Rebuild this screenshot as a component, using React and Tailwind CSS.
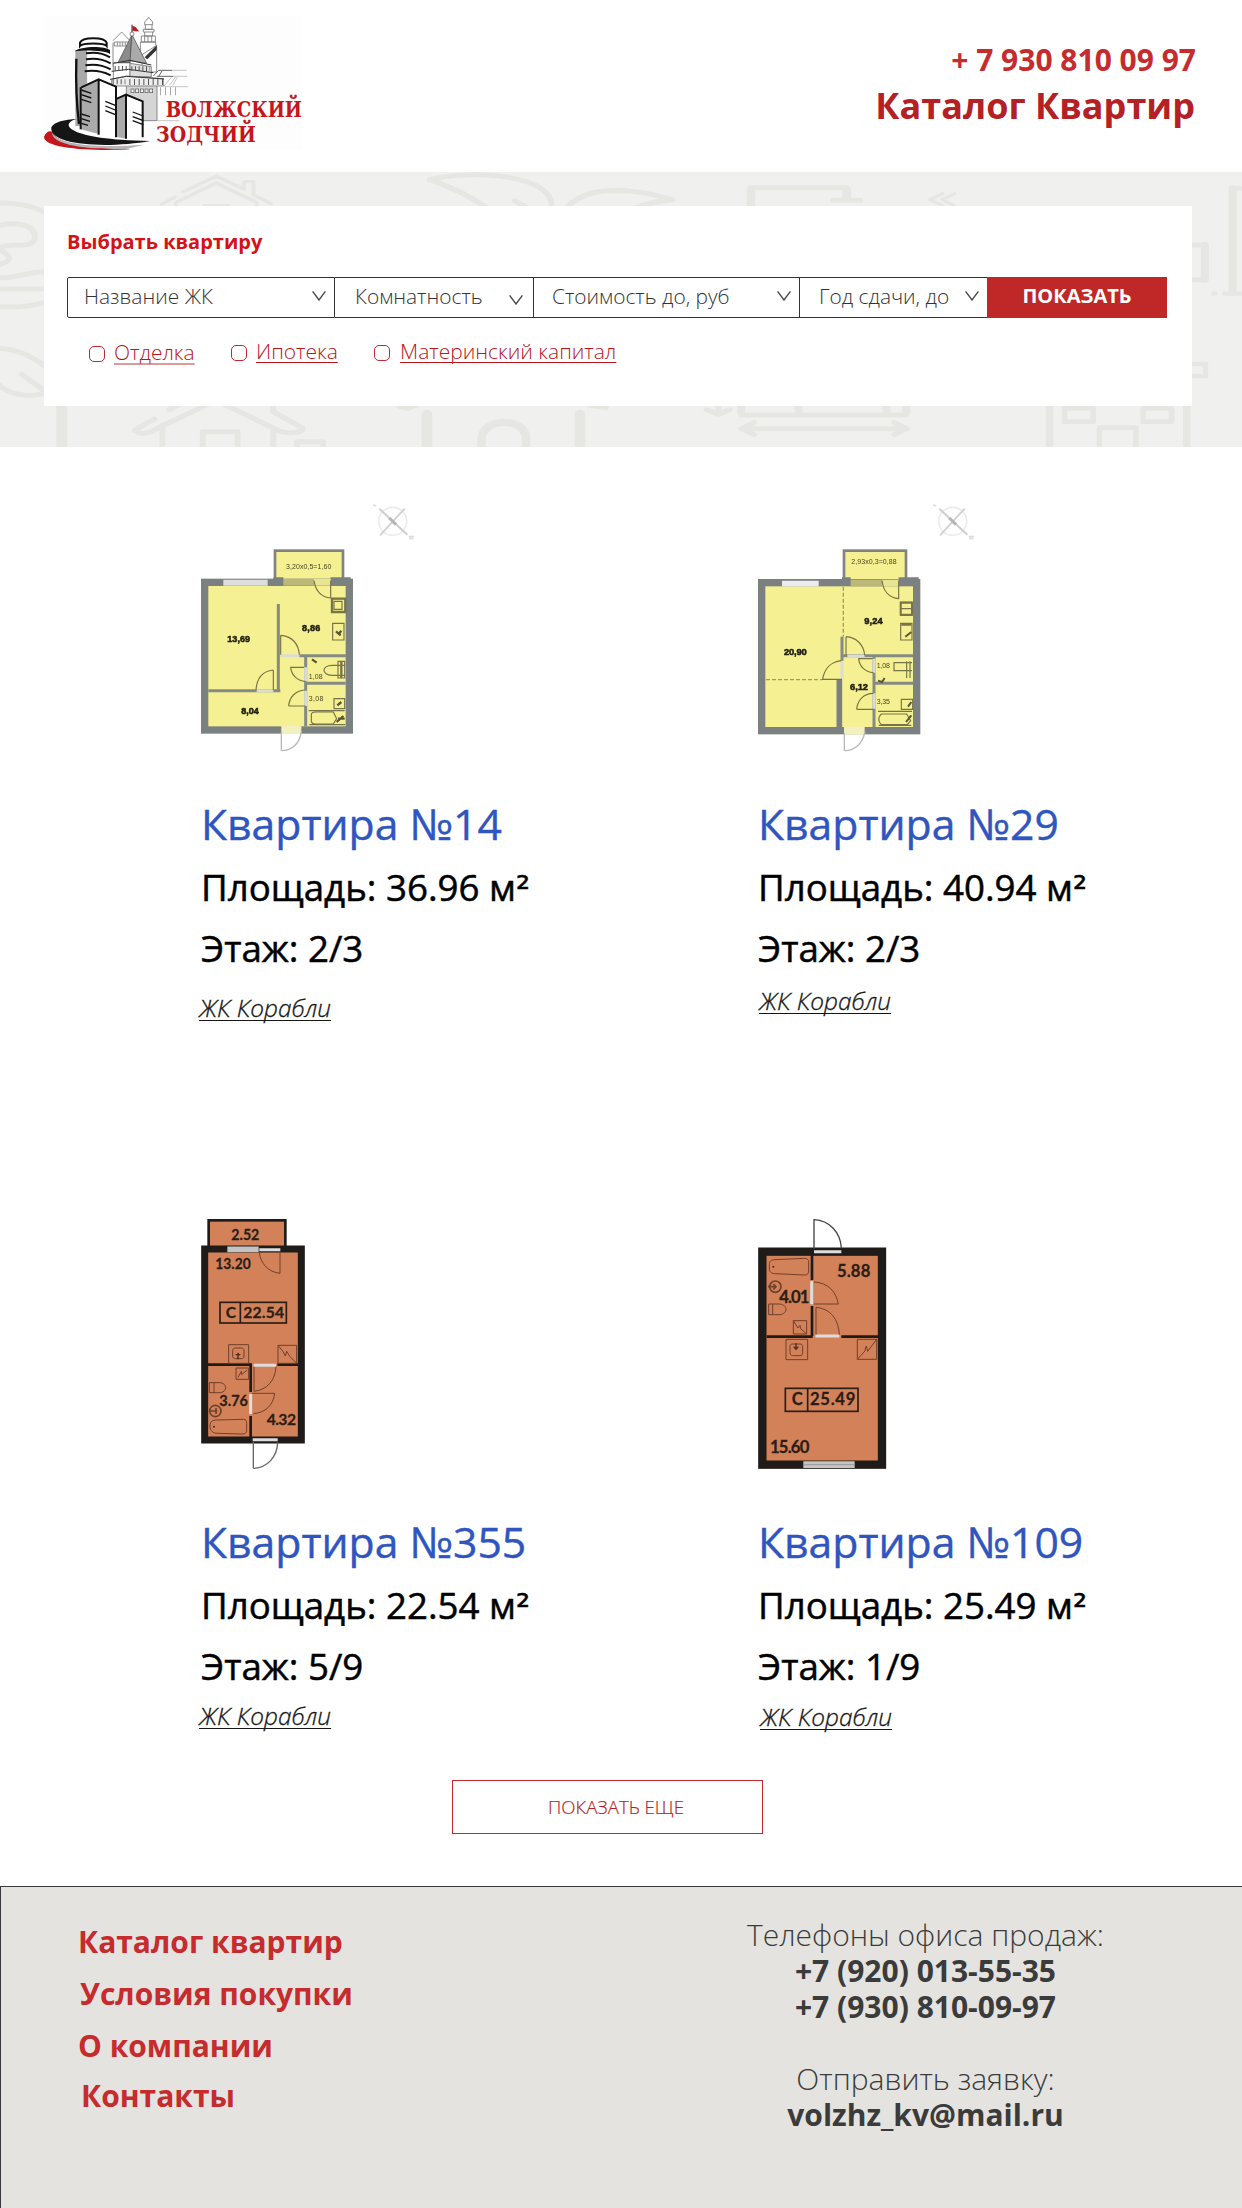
import React from "react";

function Logo() {
  return (
    <svg className="h-[170px] w-[290px] shrink-0" viewBox="0 0 870 510" fill="none">
      <rect x="42" y="50" width="774" height="400" fill="#fdfdfd" />
      {/* kremlin towers */}
      <g stroke="#777" strokeWidth="2.5">
        <path d="M249 200V128M249 122L275 96L300 122V200M253 126h44v12h-44zM262 127v10M270 127v10M278 127v10M286 127v10" fill="#fff" />
        <path d="M331 165V126h46v10M344 66l12-14 12 14v8h-24zM346 74v14h20V74M340 88h32v8h-32zM344 96v12h24V96M334 108h42v18h-42zM344 108v18M354 108v18M365 108v18" fill="#fff" />
        <path d="M336 164l44-28v80h-44z" fill="#fff" />
        <path d="M289 362V236h92v126z" fill="#d5d5d5" />
        <path d="M250 212V188h50v50h-50z" fill="#fff" />
        <path d="M300 190l64 10v30h-64z" fill="#ddd" />
        <path d="M245 238l45-10 110 8v22h-155z" fill="#eee" />
      </g>
      <path d="M344 172l36-36v14l-28 28z" fill="#333" />
      <path d="M264 188L306 104L300 188z" fill="#8b8b8b" stroke="#444" strokeWidth="2" />
      <path d="M306 104L350 190L300 182z" fill="#aaa" stroke="#444" strokeWidth="2" />
      <path d="M250 190l50-9 64 14M245 214l50-6 75 10M240 238l50-9 112 8" stroke="#333" strokeWidth="3" />
      <path d="M254 205h42" stroke="#555" strokeWidth="14" strokeDasharray="3 8" />
      <path d="M304 206h56" stroke="#555" strokeWidth="14" strokeDasharray="3 8" />
      <path d="M248 245h38" stroke="#555" strokeWidth="15" strokeDasharray="3 9" />
      <path d="M298 246h104" stroke="#555" strokeWidth="18" strokeDasharray="3 11" />
      <path d="M390 274h50" stroke="#aaa" strokeWidth="24" strokeDasharray="3 12" />
      <g fill="#eee" stroke="#555" strokeWidth="2">
        <rect x="303" y="267" width="9" height="11" /><rect x="317" y="267" width="9" height="11" /><rect x="331" y="267" width="9" height="11" /><rect x="345" y="267" width="9" height="11" /><rect x="359" y="267" width="9" height="11" />
      </g>
      <path d="M370 228l16-17h40M386 229l10-16M380 229h50" stroke="#444" strokeWidth="2.5" />
      <path d="M426 211h44M430 229h42M402 258l22-26M418 256l20-26M428 256l14-24M400 260h74M380 362h68" stroke="#bbb" strokeWidth="2.5" />
      <path d="M306 74v24" stroke="#222" strokeWidth="3" />
      <circle cx="306" cy="102" r="6" fill="#fff" stroke="#555" strokeWidth="2" />
      <path d="M308 78l9 4 9 12-18-2z" fill="#c4161c" stroke="#8d1014" />
      {/* round tower */}
      <path d="M136 150h36v100l-18 12v116h-18z" fill="#a9a9a9" />
      <path d="M172 150h66v100h-66z" fill="#fff" />
      <path d="M150 138v-10c6-18 74-18 80 0v10c-8-10-72-10-80 0z" fill="#fff" stroke="#111" strokeWidth="6" />
      <path d="M134 154c14-16 90-18 106-4v12c-18-12-82-12-106-8z" fill="#111" />
      <path d="M139 176c-2 70 0 130 8 196" stroke="#111" strokeWidth="7" />
      <path d="M168 160c24-4 52 0 72 12M168 178c24-4 52 0 74 12M166 196c24-4 54 0 76 12M164 214c26-4 54 0 78 12" stroke="#111" strokeWidth="6" />
      {/* front blocks */}
      <path d="M152 262l54-24v164l-54-14z" fill="#aaa" />
      <path d="M206 238l52 20v154l-52-8z" fill="#fff" />
      <path d="M258 296l30-10v130l-30-6z" fill="#aaa" />
      <path d="M288 286l50 18v106l-50 4z" fill="#fff" />
      <path d="M154 262l52-24 52 22v152M206 238v166M152 262v126M256 298l32-14 50 20v108M288 284v132" stroke="#111" strokeWidth="6" />
      <path d="M154 270l30 10M154 284l30 10M154 298l30 10M154 342l26 8M154 356l26 8M154 370l20 6M226 304l30 12M226 318l30 12M226 332l30 12M308 336l32 12M308 350l32 12M308 362l32 12" stroke="#111" strokeWidth="4" />
      {/* sweeping base */}
      <path d="M42 410c6-14 16-20 26-14c10 34 100 48 216 48l16 4c-110 6-260-2-258-38z" fill="#c4161c" />
      <path d="M66 396c10 36 130 50 276 38l-50 12c-120 4-228-10-226-50z" fill="#b5b5b5" />
      <path d="M64 382c8-16 40-24 76-25c-54 14-30 62 220 66c-120 22-304 16-296-41z" fill="#151515" />
      <g fill="#c4161c" fontFamily="'DejaVu Serif', 'Liberation Serif', serif" fontWeight="700" fontSize="68">
        <text x="407" y="351" textLength="409" lengthAdjust="spacingAndGlyphs">ВОЛЖСКИЙ</text>
        <text x="378" y="427" textLength="300" lengthAdjust="spacingAndGlyphs">ЗОДЧИЙ</text>
      </g>
    </svg>
  );
}

function Pattern() {
  return (
    <svg className="absolute inset-0 h-full w-full" viewBox="0 172 1242 275" fill="none" stroke="#e6e7e3" strokeLinecap="round" strokeLinejoin="round">
      <g transform="translate(0 165) scale(.3961 .3333)" strokeWidth="15">
        <path d="M-20 116c60-8 120 10 150 40M-10 184c40-14 100-10 98 34c-4 40-80 10-88 34c20 20 40 30 0 46M-10 338c60 4 66-18 130-18M-10 372h120M-10 424c50 6 90 0 130-14" />
        <path d="M-10 550c60 0 100 30 130 60M-10 650c30 44 90 50 130 30M55 628l70 60" />
        <path d="M462 80l84-46 70 38M616 72V50h24v40l44 26M408 118l34-22M444 128V112L546 54l102 58v16M516 122h60" strokeWidth="10" />
        <path d="M156 722v130" strokeWidth="28" strokeLinecap="butt" />
        <path d="M340 796l50-34M428 734l40-26M350 804c20 4 30-2 44-12L545 706l160 92c20 10 60 6 60-8L690 740V716" />
        <path d="M410 780v80M512 860v-60h88v60M690 790v60M750 850v-20h66v20" />
        <path d="M1085 44c100-30 316-20 308 86M1085 44c70 30 100 50 146 86M1300 108l30 20M1430 128c40-50 100-54 150-52" />
        <path d="M1078 748v110M1464 748v110" strokeWidth="27" />
        <path d="M1216 860v-40c4-64 110-64 112 0v40" strokeWidth="22" />
        <path d="M1008 724l20 6 26-10M1490 722l40 6" />
      </g>
      <g transform="translate(621 165) scale(.3961 .3333)" strokeWidth="15">
        <path d="M-20 78c60-4 100 10 150 26c-50 6-70 14-96 26" />
        <path d="M328 130V68h242v36M536 106h68" />
        <path d="M328 130V70M570 70v30" strokeWidth="22" strokeLinecap="butt" />
        <path d="M812 86l-32 18 32 18M842 86l-32 18 32 18" strokeWidth="9" />
        <path d="M1440 240h36v104h-36" />
        <path d="M1474 240v104M1544 70v310" strokeWidth="20" />
        <path d="M1544 70h40M1496 386h4M1524 386h60M1440 597h36v36h-36" strokeWidth="13" />
        <path d="M246 716v30M216 734l30 14 28-14" />
        <path d="M304 716v34h416v-34" />
        <path d="M448 716v32M670 716v32M304 716v32M720 716v32" strokeWidth="20" strokeLinecap="butt" />
        <path d="M306 791h414M336 773l-32 18 32 18M690 773l32 18-32 18" />
        <path d="M1082 716v144M1428 716v144" strokeWidth="19" />
        <path d="M1120 730h72v40h-72zM1318 730h72v40h-72zM1208 860v-72h92v72" strokeWidth="14" />
      </g>
    </svg>
  );
}

function Compass() {
  return (
    <g stroke="#cfcfcf" strokeWidth="5">
      <circle cx="638" cy="94" r="42" stroke="#ebebeb" />
      <path d="M598 56l84 78" strokeWidth="6" />
      <path d="M674 56l-74 80" />
      <path d="M628 84l20 20" stroke="#b5b5b5" strokeWidth="9" />
      <path d="M580 44l8 4M686 140h16M688 146h12" stroke="#ddd" />
    </g>
  );
}

function Plan14() {
  return (
    <svg className="block h-[284px] w-[242px] blur-[0.7px]" viewBox="54 0 726 852" fill="none">
      <Compass />
      <rect x="285" y="182" width="204" height="90" fill="#f5f092" stroke="#7f8483" strokeWidth="8" />
      <rect x="74" y="277" width="434" height="443" fill="#f5f092" stroke="#7b8080" strokeWidth="22" />
      <path d="M280 274h30M452 274h60" stroke="#7b8080" strokeWidth="24" />
      <path d="M130 278h133" stroke="#dedede" strokeWidth="18" />
      <path d="M310 277h92" stroke="#bdb877" strokeWidth="20" />
      <path d="M402 277h50" stroke="#e9e491" strokeWidth="20" />
      <path d="M295 342v262M85 602h216M358 497h140M377 497v212M377 580h120" stroke="#858a84" strokeWidth="9" />
      <path d="M302 497h56M377 532v42M377 602v46M230 602h50" stroke="#dcdcd4" strokeWidth="9" />
      <path d="M304 720h60" stroke="#f3f0c0" strokeWidth="24" />
      <g stroke="#77744a" strokeWidth="3.5">
        <path d="M402 272c4 30 22 50 50 52V272M302 436c34 2 54 26 56 58M302 436v58M280 540c-36 4-50 30-52 60M280 540v60M372 532h-40c2 22 18 40 44 42M326 648c2-26 20-46 48-48M326 648h50" />
        <path d="M456 326h40v40h-40zM462 334h24v24h-24zM458 400h34v50h-34zM496 526h-40c-32 0-32 30 0 30h40M474 514h20v50h-20zM462 626h32v30h-32zM386 662h108M388 704h108M394 674c0-8 8-8 14-8h52l10 20-10 16h-52c-10 0-14-4-14-10z" />
      </g>
      <path d="M456 326h40v40h-40zM484 514v50" stroke="#77744a" strokeWidth="7" />
      <path d="M476 432l8-10M468 424l14 12M470 696l20-18M474 686h20M396 508l14 10M472 646l12-10" stroke="#5a5738" strokeWidth="7" />
      <path d="M304 726v56M304 782c34 0 56-24 60-58" stroke="#b9b9b9" strokeWidth="4" />
      <g fill="#222010" stroke="#222010" strokeWidth="1.5" fontFamily="'Liberation Sans', sans-serif" fontWeight="700" fontSize="27">
        <text x="142" y="455" textLength="68">13,69</text><text x="366" y="424" textLength="55">8,86</text><text x="184" y="671" textLength="52">8,04</text>
      </g>
      <g fill="#4a4624" fontFamily="'Liberation Sans', sans-serif" fontSize="21">
        <text x="318" y="236" textLength="136">3,20x0,5=1,60</text><text x="386" y="568" textLength="42">1,08</text><text x="386" y="634" textLength="44">3,08</text>
      </g>
    </svg>
  );
}

function Plan29() {
  return (
    <svg className="block h-[284px] w-[242px] blur-[0.7px]" viewBox="45 0 726 852" fill="none">
      <Compass />
      <rect x="312" y="182" width="186" height="90" fill="#f5f092" stroke="#7f8483" strokeWidth="8" />
      <rect x="65" y="278" width="465" height="444" fill="#f5f092" stroke="#7b8080" strokeWidth="22" />
      <path d="M306 274h26M476 274h60" stroke="#7b8080" strokeWidth="24" />
      <path d="M126 281h110" stroke="#ececec" strokeWidth="17" />
      <path d="M332 279h94" stroke="#bdb877" strokeWidth="20" />
      <path d="M426 279h50" stroke="#e9e491" strokeWidth="20" />
      <path d="M298 568v144" stroke="#7b8080" strokeWidth="17" />
      <path d="M306 440v72M306 497h214M402 497v214M402 580h118" stroke="#858a84" strokeWidth="9" />
      <path d="M310 290v150M78 569h170" stroke="#a09c62" strokeWidth="4" strokeDasharray="12 6" />
      <path d="M322 498h52M402 506v42M402 610v46M306 514v52" stroke="#dcdcd4" strokeWidth="9" />
      <path d="M312 722h62" stroke="#f3f0c0" strokeWidth="24" />
      <g stroke="#77744a" strokeWidth="3.5">
        <path d="M426 272c4 32 22 52 50 54V272M318 440c32 2 54 26 56 56M318 440v56M304 512c-36 4-52 30-56 56h58M398 506h-42c2 22 18 40 44 42M350 658c2-26 20-48 50-48M350 658h50" />
        <path d="M482 336h34v40h-34zM482 356h34M482 400h34v50h-34zM516 518h-54v24h54M500 514v50M510 514v50M484 628h34v30h-34zM414 664h102M416 706h98M424 672h76l12 20-10 12h-78c-10-10-10-22 0-32z" />
      </g>
      <path d="M482 338h34v36h-34zM484 404h30" stroke="#77744a" strokeWidth="6" />
      <path d="M496 440l18-14M498 696l16-20M414 572l12 4 8-12M504 650l10-14" stroke="#5a5738" strokeWidth="6" />
      <path d="M313 728v54M313 782c34 0 56-24 62-58" stroke="#b9b9b9" strokeWidth="4" />
      <g fill="#222010" stroke="#222010" strokeWidth="1.5" fontFamily="'Liberation Sans', sans-serif" fontWeight="700" fontSize="28">
        <text x="132" y="495" textLength="68">20,90</text><text x="373" y="403" textLength="55">9,24</text><text x="330" y="600" textLength="54">6,12</text>
      </g>
      <g fill="#4a4624" fontFamily="'Liberation Sans', sans-serif" fontSize="21">
        <text x="334" y="223" textLength="136">2,93x0,3=0,88</text><text x="410" y="535" textLength="40">1,08</text><text x="410" y="641" textLength="40">3,35</text>
      </g>
    </svg>
  );
}

function Plan355() {
  return (
    <svg className="block h-[290px] w-[242px]" viewBox="54 0 726 870" fill="none">
      <rect x="86" y="61" width="230" height="90" fill="#d28159" stroke="#1f1b18" strokeWidth="8" />
      <rect x="74" y="147" width="290" height="573" fill="#d28159" stroke="#1f1b18" strokeWidth="21" />
      <path d="M84 494h132M292 494h64M212 494v82M212 648v66" stroke="#1f1b18" strokeWidth="8" />
      <path d="M142 148h94" stroke="#c4c4c4" strokeWidth="17" />
      <path d="M238 149h63M221 496h67M212 582v60M218 719h75" stroke="#ddd" strokeWidth="9" />
      <g stroke="#70402b" strokeWidth="3">
        <path d="M238 158c4 32 26 58 62 62v-62M288 500c-2 40-26 70-66 74V500M216 580h68c-4 36-28 58-64 61M146 434h60v56h-60zM158 452c0-6 4-8 8-8h18c5 0 8 3 8 8v16c0 6-3 8-8 8h-18c-5 0-8-3-8-8zM294 436h56v54h-56zM294 436l16 20 6 12 4-14 10 16 20 20M168 504h38v34h-38zM174 532l10-18v10l18-14M88 548h34c20 4 20 26 0 30h-34zM102 548v30M90 678c0-14 8-18 20-18l80-2c8 0 10 4 10 12v22c0 8-6 10-14 10l-72-2c-16 0-24-8-24-22z" />
        <circle cx="106" cy="633" r="17" strokeWidth="5" />
        <path d="M88 633h24M108 624v18" strokeWidth="5" />
      </g>
      <path d="M174 458v20M167 464h14" stroke="#4a2a1c" strokeWidth="4" />
      <circle cx="102" cy="680" r="3" fill="#4a2a1c" />
      <rect x="120" y="307" width="199" height="62" stroke="#2a1d16" strokeWidth="5" />
      <path d="M181 307v62" stroke="#2a1d16" strokeWidth="5" />
      <path d="M220 726v79M220 805c42-2 72-34 73-78" stroke="#666" strokeWidth="4" />
      <g fill="#2a1d16" stroke="#2a1d16" strokeWidth=".8" fontFamily="Lato, sans-serif" fontWeight="700" fontSize="47">
        <text x="154" y="121" textLength="84" lengthAdjust="spacingAndGlyphs">2.52</text><text x="106" y="208" textLength="106" lengthAdjust="spacingAndGlyphs">13.20</text>
        <text x="137" y="353">С</text><text x="190" y="353" textLength="122">22.54</text>
        <text x="118" y="617" textLength="86" lengthAdjust="spacingAndGlyphs">3.76</text><text x="260" y="676" textLength="88">4.32</text>
      </g>
    </svg>
  );
}

function Plan109() {
  return (
    <svg className="block h-[290px] w-[242px]" viewBox="45 0 726 870" fill="none">
      <rect x="67" y="155" width="359" height="639" fill="#d28159" stroke="#1f1b18" strokeWidth="25" />
      <path d="M80 410h138M304 410h110M216 166v74M216 318v90" stroke="#1f1b18" strokeWidth="8" />
      <path d="M190 794h154" stroke="#c4c4c4" strokeWidth="20" />
      <path d="M190 794h154" stroke="#999" strokeWidth="3" />
      <path d="M222 155h82M226 408h72M215 244v69" stroke="#ddd" strokeWidth="9" />
      <g stroke="#70402b" strokeWidth="3">
        <path d="M222 246c42 2 66 28 73 66h-73M228 322c44 4 68 36 70 82M228 322v82M138 418h65v61h-65zM150 440c0-6 3-8 8-8h22c6 0 8 3 8 8v18c0 6-3 9-8 9h-22c-5 0-8-3-8-9zM352 418h58v60h-58zM352 478l22-24 5-16 4 16 27-36M160 362h40v40h-40zM160 362l14 22 6-8 2 10 18 16M86 312h34c24 4 24 28 0 32h-34zM98 312v32M88 196c0-14 6-16 16-17l90-4c8 0 12 4 12 12v26c0 8-4 12-12 12l-88-4c-12 0-18-6-18-14z" />
        <circle cx="106" cy="260" r="17" strokeWidth="5" />
        <path d="M84 260h24M100 252l8 8-8 8" strokeWidth="5" />
      </g>
      <path d="M168 430v18M161 440l7 8 7-8" stroke="#4a2a1c" strokeWidth="4" />
      <circle cx="100" cy="200" r="3" fill="#4a2a1c" />
      <rect x="136" y="565" width="218" height="69" stroke="#2a1d16" strokeWidth="5" />
      <path d="M203 565v69" stroke="#2a1d16" strokeWidth="5" />
      <path d="M222 148V59c46 2 80 38 82 86" stroke="#444" strokeWidth="4" />
      <g fill="#2a1d16" stroke="#2a1d16" strokeWidth=".8" fontFamily="Lato, sans-serif" fontWeight="700" fontSize="50">
        <text x="291" y="232" textLength="100">5.88</text><text x="118" y="309" textLength="90">4.01</text>
        <text x="155" y="616">С</text><text x="210" y="616" textLength="136">25.49</text><text x="90" y="759" textLength="118">15.60</text>
      </g>
    </svg>
  );
}

function Chevron({ className }) {
  return (
    <svg className={`h-[10px] w-[14px] shrink-0 ${className}`} viewBox="0 0 14 10" fill="none" stroke="#4a4a4a" strokeWidth="1.4">
      <path d="M.6 .4L7 9L13.4 .4" />
    </svg>
  );
}

const FIELDS = [
  { label: "Название ЖК", cell: "w-[268px] border-l rounded-l-xs pl-4", arrow: "mr-2" },
  { label: "Комнатность", cell: "w-[199px] pl-5", arrow: "mr-2.5 mt-[8px]" },
  { label: "Стоимость до, руб", cell: "w-[266px] pl-[18px]", arrow: "mr-2" },
  { label: "Год сдачи, до", cell: "w-[187px] border-r-0 pl-[19px]", arrow: "mr-2" },
];

const OPTIONS = [
  { label: "Отделка", item: "w-[142px] gap-[9px] pt-px", text: "decoration-[#de9a9b] decoration-2" },
  { label: "Ипотека", item: "w-[143px] gap-[9px]", text: "decoration-1" },
  { label: "Материнский капитал", item: "gap-[10px]", text: "decoration-1" },
];

const FLATS = [
  { n: "14", area: "36.96", floor: "2/3", Plan: Plan14, title: "mt-5", jk: "mt-[18px] ml-px" },
  { n: "29", area: "40.94", floor: "2/3", Plan: Plan29, title: "mt-5", jk: "mt-[11px] ml-1" },
  { n: "355", area: "22.54", floor: "5/9", Plan: Plan355, title: "mt-[22px]", jk: "mt-[8px] ml-px" },
  { n: "109", area: "25.49", floor: "1/9", Plan: Plan109, title: "mt-[22px]", jk: "mt-[9px] ml-[5px]" },
];

export default function App() {
  return (
    <div className="flex h-[2208px] w-[1242px] flex-col overflow-hidden bg-white font-['Open_Sans',sans-serif]">
      <header className="flex h-[172px] shrink-0 justify-between pr-[47px] pl-[30px]">
        <Logo />
        <div className="flex flex-col items-end pt-10 font-bold whitespace-nowrap">
          <a className="-mr-px text-[30px] leading-10 text-[#c62b2e]">+ 7 930 810 09 97</a>
          <h1 className="mt-0.5 text-4xl leading-[48px] text-[#b52025]">Каталог Квартир</h1>
        </div>
      </header>

      <section className="relative h-[275px] shrink-0 bg-[#f0f0ee] pt-[34px] pl-[44px]">
        <Pattern />
        <form className="relative h-[200px] w-[1148px] bg-white pt-[22px] pl-[23px]">
          <h2 className="text-xl leading-7 font-bold text-[#d51217]">Выбрать квартиру</h2>
          <div className="mt-[21px] flex h-[41px] w-[1100px]">
            {FIELDS.map((f) => (
              <div key={f.label} className={`flex items-center justify-between border-y border-r border-[#333335] pb-[3px] whitespace-nowrap ${f.cell}`}>
                <span className="text-[20.9px] leading-7 font-light text-[#333335]">{f.label}</span>
                <Chevron className={f.arrow} />
              </div>
            ))}
            <button type="button" className="w-[180px] bg-[#c02727] pb-[3px] text-xl font-bold text-white">ПОКАЗАТЬ</button>
          </div>
          <div className="mt-[19px] flex items-start pl-[22px]">
            {OPTIONS.map((o) => (
              <label key={o.label} className={`flex items-start text-[21px] leading-7 font-light whitespace-nowrap text-[#b9151b] ${o.item}`}>
                <span className="mt-2 size-4 shrink-0 rounded-[5px] border border-[#c1272d]" />
                <span className={`underline decoration-solid underline-offset-[3px] [text-decoration-skip-ink:none] ${o.text}`}>{o.label}</span>
              </label>
            ))}
          </div>
        </form>
      </section>

      <main className="grid shrink-0 grid-cols-[557px_1fr] grid-rows-[710px_580px] pt-[43px] pl-[198px]">
        {FLATS.map(({ n, area, floor, Plan, title, jk }) => (
          <article key={n} className="flex flex-col items-start">
            <Plan />
            <h3 className={`ml-[3px] text-[42.7px] leading-[60px] text-[#2f55c0] [-webkit-text-stroke:0.4px] ${title}`}>Квартира №{n}</h3>
            <p className="mt-2 ml-[3px] text-[36.7px] leading-[50px] text-black [-webkit-text-stroke:0.5px]">
              Площадь: {area} м<span className="font-['DejaVu_Sans',sans-serif] text-[35px] leading-none">²</span>
            </p>
            <p className="mt-[11px] ml-[3px] text-[36.7px] leading-[50px] text-black [-webkit-text-stroke:0.5px]">Этаж: {floor}</p>
            <a className={`text-[24.4px] leading-[34px] font-light text-[#161616] italic underline decoration-1 underline-offset-[3px] [-webkit-text-stroke:0.3px] [text-decoration-skip-ink:none] ${jk}`}>ЖК Корабли</a>
          </article>
        ))}
      </main>

      <button type="button" className="ml-[452px] h-[54px] w-[311px] shrink-0 border border-[#c1272d] pl-[17px] text-[18.6px] font-light text-[#b81f25] [-webkit-text-stroke:0.2px]">ПОКАЗАТЬ ЕЩЕ</button>

      <footer className="mt-[52px] flex flex-1 border-t border-l border-[#3a3a3c] bg-[#e4e3df]">
        <nav className="flex w-[600px] shrink-0 flex-col pt-[35px] pl-[77px] text-[30px] leading-10 font-bold text-[#c62b2e]">
          <a>Каталог квартир</a>
          <a className="mt-3 ml-0.5">Условия покупки</a>
          <a className="mt-3">О компании</a>
          <a className="mt-[10px] ml-[3px]">Контакты</a>
        </nav>
        <address className="flex w-[641px] shrink-0 flex-col items-center pt-[30px] pl-[8px] text-[30px] leading-9 font-bold whitespace-nowrap text-[#3b3b3b] not-italic">
          <span className="font-light">Телефоны офиса продаж:</span>
          <span>+7 (920) 013-55-35</span>
          <span>+7 (930) 810-09-97</span>
          <span className="mt-9 font-light">Отправить заявку:</span>
          <span>volzhz_kv@mail.ru</span>
        </address>
      </footer>
    </div>
  );
}
